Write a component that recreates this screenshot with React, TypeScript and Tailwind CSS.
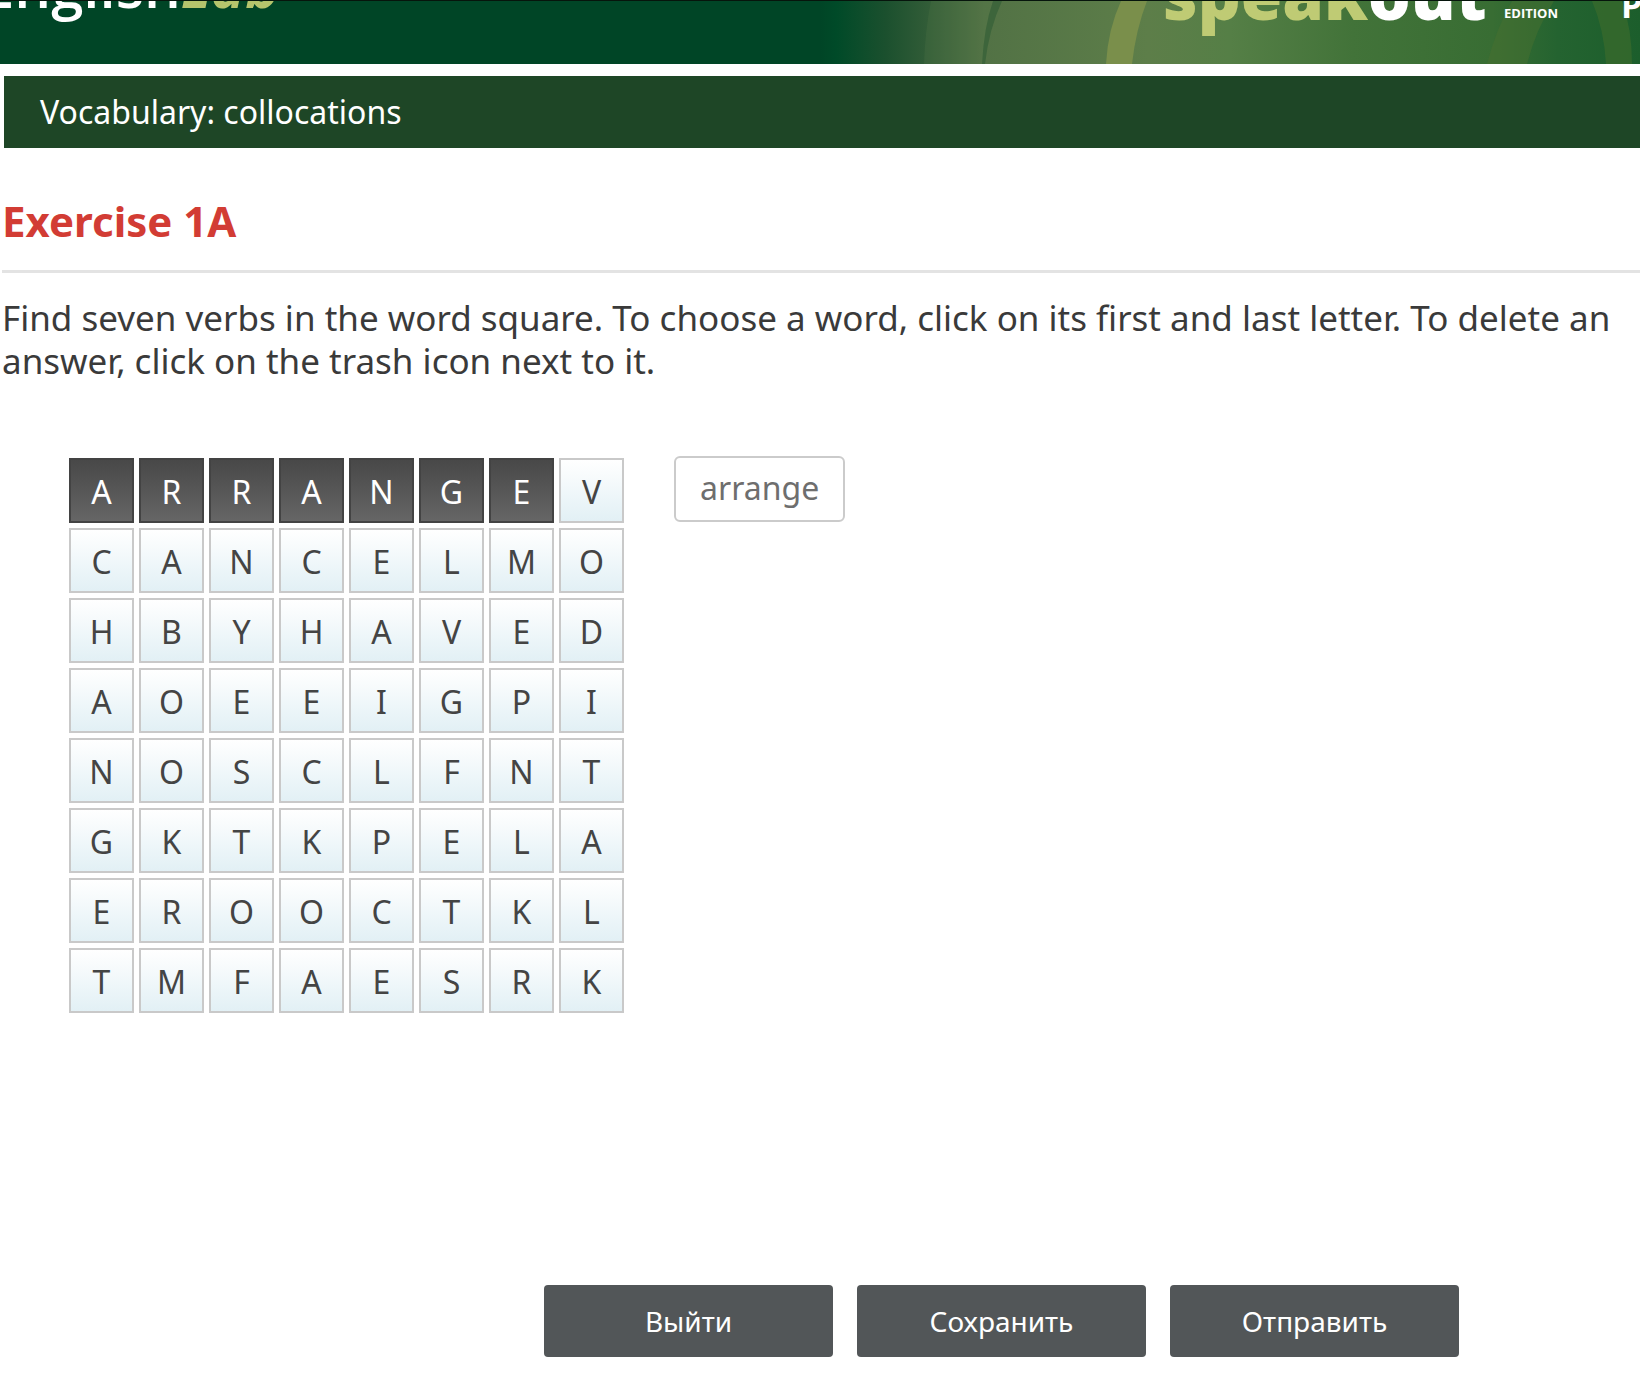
const rows = ['ARRANGEV', 'CANCELMO', 'HBYHAVED', 'AOEEIGPI', 'NOSCLFNT', 'GKTKPELA', 'EROOCTKL', 'TMFAESRK']

const answers = ['arrange']

const actions = ['Выйти', 'Сохранить', 'Отправить']

function LabLogo() {
  return (
    <svg width="300" height="63" className="shrink-0 font-['Open_Sans',sans-serif]" fontSize="58" fontWeight="600">
      <text x="-18" y="7" fill="#fff">
        English<tspan fill="#b5c46c" fontWeight="700" fontStyle="italic">Lab</tspan>
      </text>
    </svg>
  )
}

function SpeakoutLogo() {
  return (
    <svg width="820" height="63" className="shrink-0">
      <defs>
        <linearGradient id="banner" x1="0" x2="820" y1="0" y2="0" gradientUnits="userSpaceOnUse">
          <stop offset="0" stopColor="#004526" />
          <stop offset="0.02" stopColor="#004a28" />
          <stop offset="0.08" stopColor="#1b502e" />
          <stop offset="0.13" stopColor="#315c37" />
          <stop offset="0.2" stopColor="#527245" />
          <stop offset="0.4" stopColor="#5d7e49" />
          <stop offset="0.5" stopColor="#557f46" />
          <stop offset="0.65" stopColor="#427339" />
          <stop offset="0.82" stopColor="#386d33" />
          <stop offset="0.9" stopColor="#246330" />
          <stop offset="1" stopColor="#1c5e2c" />
        </linearGradient>
      </defs>
      <rect width="820" height="63" fill="url(#banner)" />
      <path d="M111 0Q105 30 104 63H163Q166 30 182 0Z" fill="#5b7c4c" fillOpacity="0.2" />
      <path d="M173 0Q164 26 162 63H165Q169 28 182 0Z" fill="#3d653b" />
      <path d="M301 0Q288 28 286 63H312Q316 28 327 0Z" fill="#7a8f4b" />
      <path d="M692 0Q676 28 667 63H707Q716 28 734 0Z" fill="#47702f" fillOpacity="0.5" />
      <path d="M772 0Q784 28 786 63H812Q812 28 802 0Z" fill="#3b6b2c" fillOpacity="0.7" />
      <g className="font-['Open_Sans',sans-serif]" fill="#fff">
        <text x="343" y="19" fontSize="67" fontWeight="800" fill="#bfcb74">
          speak<tspan fill="#fff">out</tspan>
        </text>
        <text x="684" y="17" fontSize="13" fontWeight="700">EDITION</text>
        <text x="801" y="17" fontSize="34" fontWeight="700">P</text>
      </g>
    </svg>
  )
}

function Cell({ letter, selected }: { letter: string; selected: boolean }) {
  return (
    <button
      type="button"
      aria-pressed={selected}
      className={
        selected
          ? 'size-[65px] border-2 border-[#434343] bg-linear-to-b from-[#484848] to-[#666] pt-0.5 text-white'
          : 'size-[65px] border-2 border-[#c9c9c9] bg-linear-to-b from-white to-[#e2f0f5] pt-0.5 text-[#444]'
      }
    >
      {letter}
    </button>
  )
}

export default function App() {
  return (
    <div className="min-h-screen overflow-hidden bg-white font-['Noto_Sans',sans-serif] text-[#3a3a3a]">
      <header className="flex justify-between overflow-hidden border-t border-[#06150c] bg-[#004526]">
        <LabLogo />
        <SpeakoutLogo />
      </header>

      <div className="mt-3 ml-1 bg-[#1e4626] px-9 py-3">
        <h1 className="text-[32px] leading-12 text-white">Vocabulary: collocations</h1>
      </div>

      <main className="pl-0.5">
        <h2 className="mt-12 text-[42px] leading-[50px] font-bold text-[#d23c34]">Exercise 1A</h2>
        <hr className="mt-6 border-t-3 border-[#e3e3e3]" />
        <p className="mt-[23px] pr-3 text-[35px] leading-[43px]">
          Find seven verbs in the word square. To choose a word, click on its first and last letter. To delete an
          answer, click on the trash icon next to it.
        </p>

        <div className="mt-[74px] ml-[67px] flex items-start gap-[50px]">
          <div className="mt-0.5 grid grid-cols-8 gap-[5px] text-[32px] leading-10">
            {rows.map((row, y) =>
              row.split('').map((letter, x) => <Cell key={`${x}-${y}`} letter={letter} selected={y === 0 && x < 7} />),
            )}
          </div>
          <ul>
            {answers.map((word) => (
              <li
                key={word}
                className="rounded-md border-2 border-[#cbcbcb] px-6 pt-1.5 pb-2 text-[32px] leading-12 text-[#6e6e6e]"
              >
                {word}
              </li>
            ))}
          </ul>
        </div>
      </main>

      <footer className="mt-[272px] mr-[181px] flex justify-end gap-6 pb-6">
        {actions.map((label) => (
          <button key={label} type="button" className="w-[289px] rounded-sm bg-[#525658] py-3 text-[28px] leading-12 text-white">
            {label}
          </button>
        ))}
      </footer>
    </div>
  )
}
